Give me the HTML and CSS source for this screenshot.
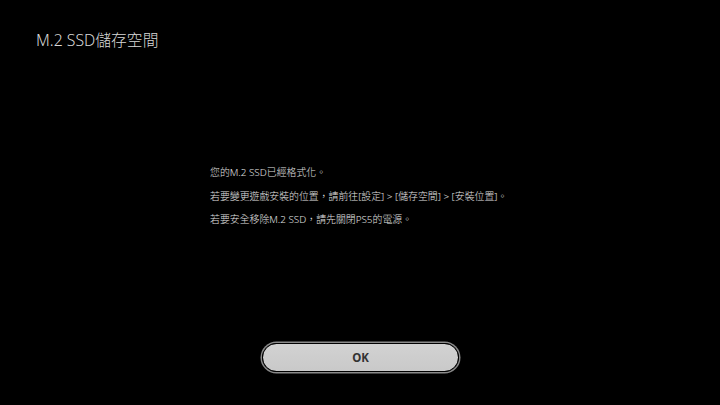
FILE: index.html
```html
<!DOCTYPE html>
<html lang="zh-Hant">
<head>
<meta charset="utf-8">
<link rel="stylesheet" href="styles.css">
</head>
<body>
<div class="screen">
  <header class="title">M.2 SSD儲存空間</header>
  <main class="content">
    <p class="line">您的M.2 SSD已經格式化。</p>
    <p class="line">若要變更遊戲安裝的位置，請前往[設定] &gt; [儲存空間] &gt; [安裝位置]。</p>
    <p class="line">若要安全移除M.2 SSD，請先關閉PS5的電源。</p>
  </main>
  <footer class="actions">
    <button class="ok">OK</button>
  </footer>
</div>
</body>
</html>
```
FILE: styles.css
```css
html, body {
  margin: 0;
  padding: 0;
  background: #000;
}
.screen {
  width: 720px;
  height: 405px;
  background: #000;
  display: flex;
  flex-direction: column;
  font-family: "Noto Sans", "Noto Sans CJK TC", sans-serif;
  color: #e6e6e6;
  box-sizing: border-box;
}
.title {
  padding: 29px 0 0 36px;
  font-size: 15.8px;
  font-weight: 300;
  line-height: 22px;
  color: #d8d8d8;
  height: 22px;
}
.content {
  padding: 114px 0 0 210px;
  flex: 1;
}
.line {
  margin: 0 0 9.5px 0;
  font-size: 9.9px;
  font-weight: 300;
  line-height: 14px;
  color: #e0e0e0;
}
.actions {
  display: flex;
  justify-content: center;
  padding: 0 0 33px 0;
}
.ok {
  width: 197px;
  height: 29px;
  margin-left: 1px;
  border-radius: 15px;
  border: 1px solid #000;
  box-shadow: 0 0 0 1.5px #8a8a8a;
  background: linear-gradient(#d2d2d2, #c9c9c9);
  font-family: "Noto Sans", "Open Sans", sans-serif;
  font-weight: 700;
  font-size: 11.5px;
  color: #333;
  padding: 0;
}
```
